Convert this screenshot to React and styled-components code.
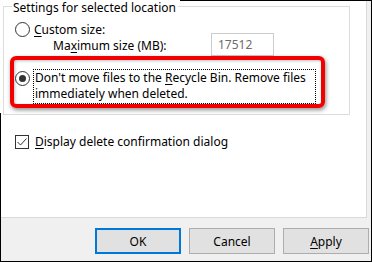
import React from "react";
import styled, { createGlobalStyle } from "styled-components";

const GlobalStyle = createGlobalStyle`
  html, body {
    margin: 0;
    padding: 0;
    background: #fff;
  }
  body {
    font-family: "Noto Sans", "Liberation Sans", sans-serif;
    font-size: 12px;
    color: #000;
  }
`;

const Frame = styled.div`
  position: relative;
  width: 372px;
  height: 262px;
  box-sizing: border-box;
  background: #f0f0f0;
  border-right: 1px solid #000;
  border-bottom: 1px solid #000;
  display: flex;
  flex-direction: column;

  /* the cropped screenshot frame only shows on part of the top and left */
  &::before {
    content: "";
    position: absolute;
    top: 0;
    left: 180px;
    right: 0;
    height: 1px;
    background: #000;
  }
  &::after {
    content: "";
    position: absolute;
    left: 0;
    top: 113px;
    bottom: 0;
    width: 1px;
    background: #000;
  }
`;

const Page = styled.div`
  width: 367px;
  height: 218px;
  box-sizing: border-box;
  background: #fff;
  border-right: 1px solid #d9d9d9;
  border-bottom: 1px solid #d9d9d9;
  padding-left: 3px;
  display: flex;
  flex-direction: column;
  align-items: flex-start;
`;

const GroupBox = styled.div`
  width: 347px;
  display: flex;
  flex-direction: column;
`;

const GroupHeader = styled.div`
  display: flex;
  align-items: flex-start;
  height: 14px;
`;

const HeaderEdge = styled.span`
  align-self: stretch;
  margin-top: 6px;
  border-top: 1px solid #dcdcdc;
  ${(p) => (p.$end ? "flex: 1; border-right: 1px solid #dcdcdc;" : "width: 8px; border-left: 1px solid #dcdcdc;")}
`;

const Legend = styled.span`
  padding: 0 2px 0 1px;
  line-height: 16.4px;
  margin-bottom: -2.4px;
  white-space: nowrap;
  background: #fff;
`;

const GroupBody = styled.div`
  height: 100px;
  border: 1px solid #dcdcdc;
  border-top: none;
  display: flex;
  flex-direction: column;
  align-items: flex-start;
`;

const OptionRow = styled.label`
  display: flex;
  align-items: center;
  gap: 4px;
  height: 16px;
  margin: 7px 0 0 11px;
  line-height: 13px;
`;

const Radio = styled.span`
  width: 15px;
  height: 15px;
  box-sizing: border-box;
  border: 1px solid #333;
  border-radius: 50%;
  background: #fff;
  display: flex;
  align-items: center;
  justify-content: center;
  flex-shrink: 0;
  margin-top: ${(p) => (p.$top ? "2px" : "0")};

  &::after {
    content: "";
    width: 7px;
    height: 7px;
    border-radius: 50%;
    background: ${(p) => (p.$checked ? "#333" : "transparent")};
  }
`;

const SizeRow = styled.div`
  display: flex;
  align-items: center;
  height: 23px;
  margin: -4px 0 0 49px;
  line-height: 13px;
`;

const SizeLabel = styled.span`
  width: 158px;
  padding-top: 2px;
`;

const SizeInput = styled.div`
  width: 63px;
  height: 23px;
  box-sizing: border-box;
  border: 1px solid #cccccc;
  padding-left: 6px;
  display: flex;
  align-items: center;
  color: #6d6d6d;
`;

const Highlight = styled.div`
  width: 315px;
  height: 52px;
  box-sizing: border-box;
  margin-left: 6px;
  border: 4px solid #f20000;
  border-radius: 6px;
  box-shadow: 1px 2px 4px rgba(0, 0, 0, 0.45), inset 1px 1px 3px rgba(0, 0, 0, 0.25);
  padding: 9px 0 0 1px;
  display: flex;
  align-items: flex-start;
  gap: 3px;
`;

const FocusText = styled.span`
  width: 283px;
  box-sizing: border-box;
  border: 1px dotted #000;
  padding: 0 1px;
  line-height: 16.4px;
  white-space: nowrap;
`;

const CheckRow = styled.label`
  display: flex;
  align-items: center;
  gap: 6px;
  margin: 18px 0 0 12px;
`;

const CheckBox = styled.span`
  width: 14px;
  height: 14px;
  box-sizing: border-box;
  border: 1px solid #333;
  background: #fff;
  display: flex;
  align-items: center;
  justify-content: center;
`;

const ButtonBar = styled.div`
  flex: 1;
  display: flex;
  justify-content: flex-end;
  align-items: flex-start;
  gap: 8px;
  padding: 10px 2px 0 0;
`;

const Button = styled.button`
  width: 86px;
  height: 26px;
  box-sizing: border-box;
  margin: 0;
  padding: 0;
  background: #e1e1e1;
  border: ${(p) => (p.$primary ? "2px solid #0078d7" : "1px solid #adadad")};
  font-family: inherit;
  font-size: 12px;
  color: #000;
`;

const Key = styled.u`
  text-underline-offset: 2px;
`;

export default function App() {
  return (
    <>
      <GlobalStyle />
      <Frame>
        <Page>
          <GroupBox>
            <GroupHeader>
              <HeaderEdge />
              <Legend>Settings for selected location</Legend>
              <HeaderEdge $end />
            </GroupHeader>
            <GroupBody>
              <OptionRow>
                <Radio />
                <span>
                  <Key>C</Key>ustom size:
                </span>
              </OptionRow>
              <SizeRow>
                <SizeLabel>
                  Ma<Key>x</Key>imum size (MB):
                </SizeLabel>
                <SizeInput>17512</SizeInput>
              </SizeRow>
              <Highlight>
                <Radio $checked $top />
                <FocusText>
                  Don't move files to the <Key>R</Key>ecycle Bin. Remove files
                  <br />
                  immediately when deleted.
                </FocusText>
              </Highlight>
            </GroupBody>
          </GroupBox>
          <CheckRow>
            <CheckBox>
              <svg width="12" height="12" viewBox="0 0 12 12">
                <polyline points="1.5,6 4.5,9 10.5,2.5" fill="none" stroke="#333" strokeWidth="1" />
              </svg>
            </CheckBox>
            <span>
              <Key>D</Key>isplay delete confirmation dialog
            </span>
          </CheckRow>
        </Page>
        <ButtonBar>
          <Button $primary>OK</Button>
          <Button>Cancel</Button>
          <Button>
            <Key>A</Key>pply
          </Button>
        </ButtonBar>
      </Frame>
    </>
  );
}
